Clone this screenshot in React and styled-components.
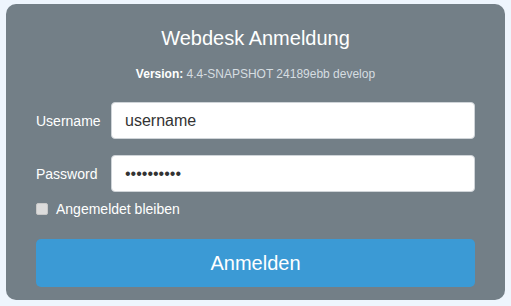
import React from "react";
import styled, { createGlobalStyle } from "styled-components";

const Global = createGlobalStyle`
  html, body { margin: 0; padding: 0; background: #eef5fd; }
  body { font-family: "Liberation Sans", Arial, sans-serif; }
  * { box-sizing: border-box; }
`;

const Page = styled.div`
  padding: 4px 6px 6px 6px;
`;

const Panel = styled.form`
  background: #737f87;
  border-radius: 10px;
  padding: 22px 30px 13px 30px;
  display: flex;
  flex-direction: column;
`;

const Title = styled.h1`
  margin: 0;
  font-size: 20px;
  line-height: 24px;
  font-weight: normal;
  color: #ffffff;
  text-align: center;
`;

const Version = styled.div`
  margin-top: 17px;
  font-size: 12px;
  line-height: 14px;
  text-align: center;
  color: #d6dde1;
  b { color: #ffffff; font-weight: bold; }
`;

const Fields = styled.div`
  margin-top: 21px;
  display: grid;
  grid-template-columns: 75px 1fr;
  row-gap: 16px;
  align-items: center;
`;

const Label = styled.label`
  font-size: 14px;
  color: #ffffff;
`;

const Input = styled.input`
  height: 37px;
  width: 100%;
  border: 1px solid #cfd4d8;
  border-radius: 4px;
  background: #ffffff;
  padding: 0 13px;
  font-family: "Liberation Sans", Arial, sans-serif;
  font-size: 16px;
  color: #333333;
  outline: none;
`;

const RememberRow = styled.label`
  margin-top: 9px;
  display: flex;
  align-items: center;
  gap: 8px;
  font-size: 14px;
  color: #ffffff;
  line-height: 16px;
`;

const Box = styled.span`
  width: 12px;
  height: 12px;
  border-radius: 2px;
  background: #dcdcdc;
  border: 1px solid #c8c8c8;
  display: inline-block;
`;

const Button = styled.button`
  margin-top: 22px;
  height: 48px;
  border: none;
  border-radius: 5px;
  background: #3b9ad5;
  color: #ffffff;
  font-family: "Liberation Sans", Arial, sans-serif;
  font-size: 20px;
`;

export default function App() {
  return (
    <Page>
      <Global />
      <Panel onSubmit={(e) => e.preventDefault()}>
        <Title>Webdesk Anmeldung</Title>
        <Version>
          <b>Version:</b> 4.4-SNAPSHOT 24189ebb develop
        </Version>
        <Fields>
          <Label>Username</Label>
          <Input type="text" defaultValue="username" />
          <Label>Password</Label>
          <Input type="password" defaultValue="1234567890" />
        </Fields>
        <RememberRow>
          <Box />
          Angemeldet bleiben
        </RememberRow>
        <Button type="submit">Anmelden</Button>
      </Panel>
    </Page>
  );
}
